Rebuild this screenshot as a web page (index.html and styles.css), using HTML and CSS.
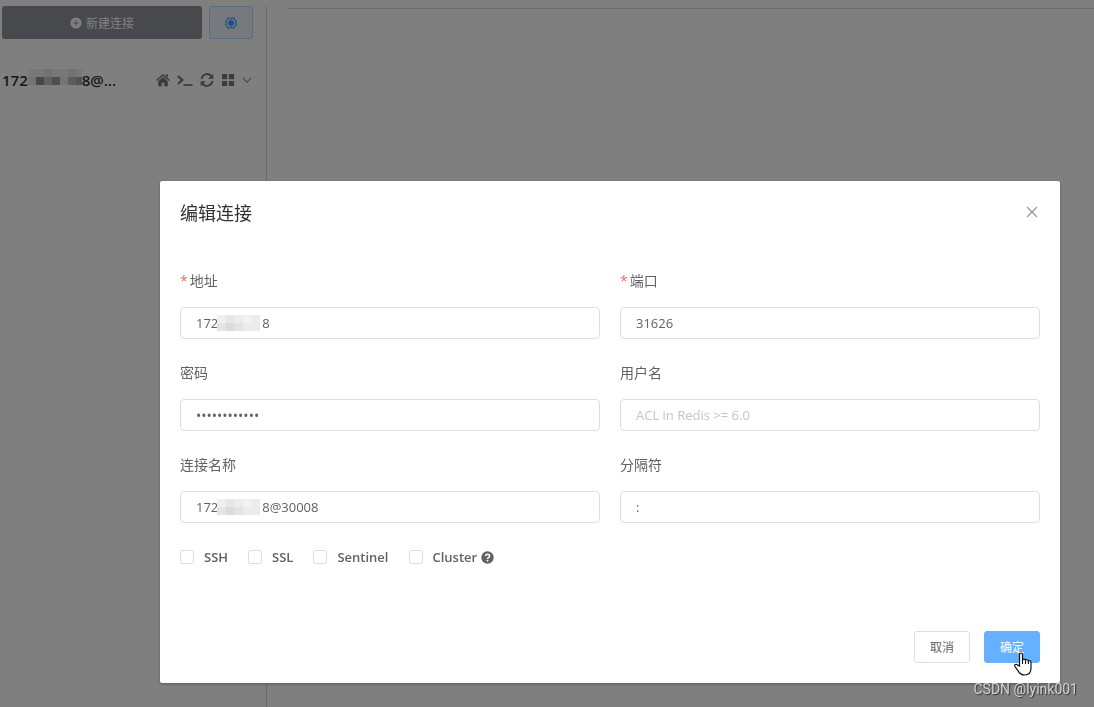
FILE: index.html
```
<!DOCTYPE html>
<html lang="zh-CN">
<head>
<meta charset="utf-8">
<title>编辑连接</title>
<link rel="stylesheet" href="styles.css">
</head>
<body>
<div class="app">
  <aside class="sidebar">
    <div class="toolbar">
      <button class="btn-new" type="button">
        <svg width="12" height="12" viewBox="0 0 12 12"><circle cx="6" cy="6" r="5.6" fill="#fff"/><path d="M6 3.3v5.4M3.3 6h5.4" stroke="#909399" stroke-width="1"/></svg>
        <span>新建连接</span>
      </button>
      <button class="btn-settings" type="button" aria-label="设置">
        <svg width="12" height="12" viewBox="0 0 12 12" fill="none" stroke="#409eff"><path d="M2.900 1.100h1.700L6 2l1.400-.9h1.700l.7 1.700 1.600 1.500L10.600 6l.8 1.700-1.600 1.500-.7 1.700H7.400L6 10l-1.400.9H2.900l-.7-1.700L.6 7.700 1.400 6 .6 4.300l1.600-1.500z" stroke-width="1.100"/><circle cx="6" cy="6" r="3" fill="#409eff" stroke="none"/></svg>
      </button>
    </div>
    <div class="connection">
      <div class="conn-name">172<span class="mosaic mosaic-dark"><i></i><i></i><i></i><i></i><i></i><i></i><i></i><i></i><i></i><i></i><i></i><i></i><i></i><i></i></span>8@...</div>
      <div class="conn-icons">
        <svg width="14" height="14" viewBox="0 0 14 14"><path d="M7 4 2.200 8.200v5h3.500V9.700h2.600v3.500h3.500v-5zM9.800 1.300h2v3.500l-2-1.700z" fill="#74777d"/><path d="M.5 7.500 7 2l6.500 5.500" fill="none" stroke="#74777d" stroke-width="1.600"/></svg>
        <svg width="16" height="14" viewBox="0 0 16 14" fill="none" stroke="#74777d"><path d="m.8 3 4.500 4-4.500 4" stroke-width="2.200"/><path d="M6.500 12h9" stroke-width="1.700"/></svg>
        <svg width="14" height="14" viewBox="0 0 14 14"><path d="M1.500 5.800A5.600 5.600 0 0 1 11.200 3M12.500 8.200A5.600 5.600 0 0 1 2.800 11" fill="none" stroke="#74777d" stroke-width="2"/><path d="M13.300.7v5H8.200zM.7 13.300v-5h5.100z" fill="#74777d"/></svg>
        <svg width="14" height="14" viewBox="0 0 14 14"><path d="M1 1h5.200v5.200H1zM7.900 1h5.200v5.200H7.900zM1 7.900h5.200v5.200H1zM7.900 7.900h5.200v5.200H7.900z" fill="#74777d"/></svg>
        <svg width="10" height="14" viewBox="0 0 10 14"><path d="m.7 4.800 4.300 4.400 4.300-4.400" fill="none" stroke="#909399" stroke-width="1.100"/></svg>
      </div>
    </div>
  </aside>
  <main class="content"><div class="tab-line"></div></main>
</div>

<div class="overlay">
  <section class="dialog" role="dialog" aria-labelledby="dlg-title">
    <header class="dialog-head">
      <h1 id="dlg-title">编辑连接</h1>
      <button class="close" type="button" aria-label="关闭"><svg width="12" height="12" viewBox="0 0 12 12"><path d="m1 1 10 10M11 1 1 11" stroke="#909399" stroke-width="1.100"/></svg></button>
    </header>
    <form class="form">
      <div class="fields">
        <div class="field"><label class="required" for="host">地址</label><div class="control"><input id="host" type="text" value="172&nbsp;&nbsp;&nbsp;&nbsp;&nbsp;&nbsp;&nbsp;&nbsp;&nbsp;&nbsp;&nbsp;&nbsp;&nbsp;8"><span class="mosaic mosaic-light"><i></i><i></i><i></i><i></i><i></i><i></i><i></i><i></i><i></i><i></i></span></div></div>
        <div class="field"><label class="required" for="port">端口</label><div class="control"><input id="port" type="text" value="31626"></div></div>
        <div class="field"><label for="pass">密码</label><div class="control"><input id="pass" type="password" value="abcdefghijkl"></div></div>
        <div class="field"><label for="user">用户名</label><div class="control"><input id="user" type="text" placeholder="ACL in Redis &gt;= 6.0"></div></div>
        <div class="field"><label for="name">连接名称</label><div class="control"><input id="name" type="text" value="172&nbsp;&nbsp;&nbsp;&nbsp;&nbsp;&nbsp;&nbsp;&nbsp;&nbsp;&nbsp;&nbsp;&nbsp;&nbsp;8@30008"><span class="mosaic mosaic-light"><i></i><i></i><i></i><i></i><i></i><i></i><i></i><i></i><i></i><i></i></span></div></div>
        <div class="field"><label for="sep">分隔符</label><div class="control"><input id="sep" type="text" value=":"></div></div>
      </div>
      <div class="checks">
        <label><input type="checkbox"><span>SSH</span></label>
        <label><input type="checkbox"><span>SSL</span></label>
        <label><input type="checkbox"><span>Sentinel</span></label>
        <label><input type="checkbox"><span>Cluster</span><svg class="help" width="13" height="13" viewBox="0 0 13 13"><circle cx="6.500" cy="6.500" r="6.200" fill="#606266"/><path d="M4.600 5.100c0-2.500 4-2.400 4-.2 0 1.500-2 1.300-2 3" fill="none" stroke="#fff" stroke-width="1.500"/><circle cx="6.500" cy="9.700" r=".9" fill="#fff"/></svg></label>
      </div>
      <footer class="actions">
        <button class="btn" type="button">取消</button>
        <button class="btn btn-primary" type="button">确定
          <svg class="cursor" width="18" height="24" viewBox="0 0 18 24"><path d="M5.500 14V2.500c0-2 3-2 3 0V8c.3-1.300 2.900-1.200 3 .4.500-1.100 2.800-.9 2.900.7.800-.8 2.600-.4 2.600 1.200V16c0 4.200-2.500 7-6.500 7-3.500 0-5-1.600-6.400-4.100L.9 14.500c-.8-1.700 1.100-3 2.500-1.600z" fill="#fff" stroke="#111" stroke-width="1.200"/><path d="M8.500 8v4M11.500 8.500V12M14.400 9.200V12" stroke="#111" stroke-width="1.100"/></svg>
        </button>
      </footer>
    </form>
  </section>
</div>
<div class="watermark">CSDN @lyink001</div>
</body>
</html>
```
FILE: styles.css
```
* { box-sizing: border-box; }
body {
  margin: 0;
  background: #fff;
  color: #606266;
  font: 13px "Open Sans", "Noto Sans CJK SC", sans-serif;
  overflow: hidden;
}
button, input { font: inherit; margin: 0; }
svg { display: block; flex: none; }

.app { display: flex; height: 100vh; padding-top: 6px; }
.sidebar { width: 267px; padding: 0 13px 0 2px; border-right: 1px solid #d4d6da; }
.toolbar { display: flex; gap: 7px; }
.btn-new {
  flex: 1;
  display: flex;
  align-items: center;
  justify-content: center;
  gap: 4px;
  height: 33px;
  padding: 0;
  border: 0;
  border-radius: 3px;
  background: #909399;
  color: #fff;
  font-size: 12px;
}
.btn-settings {
  display: flex;
  align-items: center;
  justify-content: center;
  width: 44px;
  height: 33px;
  padding: 0;
  border: 1px solid #b3d8ff;
  border-radius: 3px;
  background: #ecf5ff;
}
.connection {
  display: flex;
  align-items: center;
  justify-content: space-between;
  height: 32px;
  margin-top: 25px;
}
.conn-name { display: flex; align-items: center; color: #303133; font-size: 15px; font-weight: 600; }
.conn-icons { display: flex; align-items: center; gap: 7px; padding-right: 1px; }

.mosaic { display: grid; grid-auto-rows: 8px; }
.mosaic-dark { grid-template-columns: repeat(7, 8px); margin-top: -6px; width: 54px; overflow: hidden; }
.mosaic i { background: #ececec; }
.mosaic-dark i { background: #f0f0f0; }
.mosaic-dark i:nth-child(3n) { background: #e4e4e4; }
.mosaic-dark i:nth-child(n+8) { background: #d0d2d0; }
.mosaic-dark i:nth-child(8) { background: #e6e8e6; }
.mosaic-dark i:nth-child(9) { background: #8c8e8c; }
.mosaic-dark i:nth-child(10) { background: #c0c2c0; }
.mosaic-dark i:nth-child(11) { background: #9a9c9a; }
.mosaic-dark i:nth-child(12) { background: #eaebea; }
.mosaic-dark i:nth-child(13) { background: #b8bab8; }
.mosaic-dark i:nth-child(14) { background: #a4a6a4; }
.mosaic-light {
  position: absolute;
  left: 37px;
  top: 8px;
  grid-template-columns: repeat(5, 1fr);
  width: 43px;
}
.mosaic-light i:nth-child(1) { background: #f0f0f0; }
.mosaic-light i:nth-child(2) { background: #e6e7e7; }
.mosaic-light i:nth-child(4) { background: #f2f2f2; }
.mosaic-light i:nth-child(6) { background: #e4e4e5; }
.mosaic-light i:nth-child(7) { background: #dadcdc; }
.mosaic-light i:nth-child(8) { background: #e3e3e4; }

.content { flex: 1; padding: 2px 0 0 21px; }
.tab-line { border-top: 1px solid #d8dade; }

.overlay {
  position: fixed;
  inset: 0;
  padding: 181px 34px 0 160px;
  background: rgba(0, 0, 0, 0.5);
}
.dialog {
  padding: 20px;
  border-radius: 2px;
  background: #fff;
  box-shadow: 0 1px 3px rgba(0, 0, 0, 0.3);
}
.dialog-head { display: flex; justify-content: space-between; align-items: center; height: 24px; }
.dialog-head h1 { margin: 0; color: #303133; font-size: 18px; font-weight: 400; line-height: 24px; }
.close { padding: 0 2px 2px; border: 0; background: none; }
.form { padding-top: 40px; }
.fields { display: grid; grid-template-columns: 1fr 1fr; gap: 18px 20px; }
.field { display: flex; flex-direction: column; gap: 10px; }
.field label { font-size: 14px; line-height: 32px; height: 32px; }
.required::before { content: "*"; margin-right: 2px; color: #f56c6c; }
.control { position: relative; display: flex; }
.control input {
  width: 100%;
  height: 32px;
  padding: 0 15px;
  border: 1px solid #dcdfe6;
  border-radius: 4px;
  background: #fff;
  color: #606266;
  outline: 0;
}
.control input::placeholder { color: #c0c4cc; opacity: 1; }
.control input[type="password"] { font-size: 14px; }
.checks { display: flex; gap: 20px; height: 32px; margin-top: 18px; }
.checks label { display: flex; align-items: center; font-weight: 600; }
.checks input {
  appearance: none;
  width: 14px;
  height: 14px;
  margin-right: 10px;
  border: 1px solid #dcdfe6;
  border-radius: 2px;
  background: #fff;
}
.help { margin-left: 4px; }
.actions { display: flex; justify-content: flex-end; gap: 14px; margin-top: 58px; }
.btn {
  position: relative;
  width: 56px;
  height: 32px;
  padding: 0;
  border: 1px solid #dcdfe6;
  border-radius: 3px;
  background: #fff;
  color: #606266;
  font-size: 12px;
}
.btn-primary { border-color: #66b1ff; background: #66b1ff; color: #fff; }
.cursor { position: absolute; left: 29px; top: 20px; }
.watermark {
  position: fixed;
  right: 16px;
  bottom: 9px;
  color: #d2d2d2;
  font: 14px/18px Roboto, sans-serif;
  text-shadow: 1px 1px 1px #333;
}
```
